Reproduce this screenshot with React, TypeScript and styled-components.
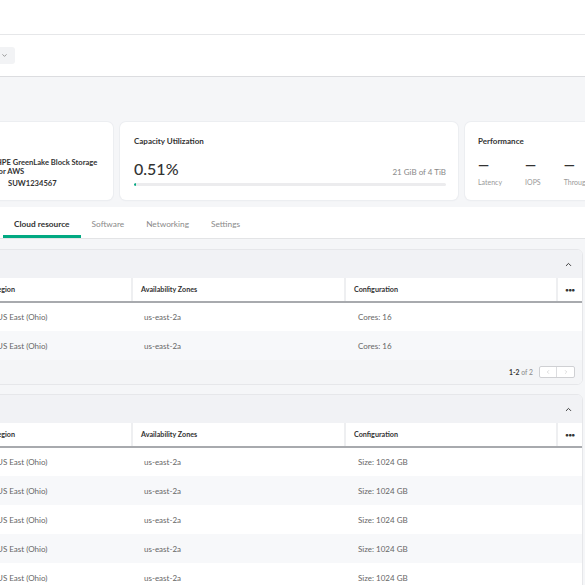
import styled, { createGlobalStyle } from "styled-components";
import { ChevronDown, ChevronUp, ChevronLeft, ChevronRight } from "lucide-react";

interface Row {
  region: string;
  zone: string;
  config: string;
}

const computeRows: Row[] = [
  { region: "US East (Ohio)", zone: "us-east-2a", config: "Cores: 16" },
  { region: "US East (Ohio)", zone: "us-east-2a", config: "Cores: 16" },
];

const volumeRows: Row[] = Array.from({ length: 6 }, () => ({
  region: "US East (Ohio)",
  zone: "us-east-2a",
  config: "Size: 1024 GB",
}));

const GlobalStyle = createGlobalStyle`
  html, body {
    margin: 0;
    padding: 0;
    background: #ffffff;
    overflow: hidden;
  }
  body {
    width: 585px;
    height: 585px;
    font-family: Lato, "Noto Sans", sans-serif;
    color: #333;
  }
  * { box-sizing: border-box; }
`;

export default function App() {
  const used = 0.51;

  const ResourceTable = ({ rows }: { rows: Row[] }) => (
    <Table>
      <colgroup>
        <col style={{ width: 147 }} />
        <col style={{ width: 213 }} />
        <col style={{ width: 212 }} />
        <col />
      </colgroup>
      <thead>
        <tr>
          <Th>Region</Th>
          <Th>Availability Zones</Th>
          <Th>Configuration</Th>
          <Th $center>
            <Dots>•••</Dots>
          </Th>
        </tr>
      </thead>
      <tbody>
        {rows.map((row, index) => (
          <Tr key={index} $striped={index % 2 === 1}>
            <Td>{row.region}</Td>
            <Td>{row.zone}</Td>
            <Td $pad={13}>{row.config}</Td>
            <Td />
          </Tr>
        ))}
      </tbody>
    </Table>
  );

  return (
    <>
      <GlobalStyle />
      <Page>
        <Header />
        <Toolbar>
          <SelectButton>
            <ChevronDown size={7} strokeWidth={2.5} />
          </SelectButton>
        </Toolbar>

        <Section>
          <CardRow>
            <Card>
              <ProductBlock>
                <ProductName>HPE GreenLake Block Storage</ProductName>
                <ProductName>for AWS</ProductName>
                <Serial>SUW1234567</Serial>
              </ProductBlock>
            </Card>

            <Card>
              <CardTitle>Capacity Utilization</CardTitle>
              <ValueRow>
                <BigValue>{used}%</BigValue>
                <Muted>21 GiB of 4 TiB</Muted>
              </ValueRow>
              <Bar>
                <BarFill style={{ width: `${used}%` }} />
              </Bar>
            </Card>

            <Card $inset={13}>
              <CardTitle>Performance</CardTitle>
              <Metrics>
                {["Latency", "IOPS", "Throughput"].map((label) => (
                  <Metric key={label}>
                    <Dash>—</Dash>
                    <MetricLabel>{label}</MetricLabel>
                  </Metric>
                ))}
              </Metrics>
            </Card>
          </CardRow>

          <TabBand>
            <Tab $active>Cloud resource</Tab>
            <Tab>Software</Tab>
            <Tab>Networking</Tab>
            <Tab>Settings</Tab>
          </TabBand>

          <Panel>
            <PanelHead>
              <ChevronUp size={9} strokeWidth={2.5} />
            </PanelHead>
            <ResourceTable rows={computeRows} />
            <PanelFoot>
              <PageInfo>
                <b>1-2</b> of 2
              </PageInfo>
              <Pager>
                <PagerButton>
                  <ChevronLeft size={6} strokeWidth={2} />
                </PagerButton>
                <PagerButton>
                  <ChevronRight size={6} strokeWidth={2} />
                </PagerButton>
              </Pager>
            </PanelFoot>
          </Panel>

          <Panel $gap={9}>
            <PanelHead>
              <ChevronUp size={9} strokeWidth={2.5} />
            </PanelHead>
            <ResourceTable rows={volumeRows} />
          </Panel>
        </Section>
      </Page>
    </>
  );
}

const Page = styled.div`
  width: 601px;
  margin-left: -16px;
`;

const Header = styled.header`
  height: 35px;
  border-bottom: 1px solid #e6e7e9;
`;

const Toolbar = styled.div`
  height: 42px;
  display: flex;
  align-items: center;
  border-bottom: 1px solid #dcdde0;
  box-shadow: 0 1px 0 #eceef0;
`;

const SelectButton = styled.div`
  width: 31px;
  height: 17px;
  display: flex;
  align-items: center;
  justify-content: flex-end;
  padding-right: 7px;
  background: #f2f3f5;
  border-radius: 3px;
  color: #777;
`;

const Section = styled.main`
  background: #f5f6f8;
  padding: 45px 2px 40px 0;
  min-height: 520px;
`;

const CardRow = styled.div`
  display: grid;
  grid-template-columns: 129px 338px 260px;
  column-gap: 7px;
  height: 78px;
`;

const Card = styled.div<{ $inset?: number }>`
  background: #ffffff;
  border-radius: 6px;
  box-shadow: 0 0 0 1px #eceef1, 0 1px 2px rgba(0, 0, 0, 0.04);
  padding: 14px 12px 12px ${(p) => p.$inset ?? 14}px;
  display: flex;
  flex-direction: column;
`;

const ProductBlock = styled.div`
  margin: auto 0 0 -2px;
  display: flex;
  flex-direction: column;
`;

const ProductName = styled.span`
  font-size: 7.6px;
  line-height: 9px;
  font-weight: 700;
  color: #333;
  white-space: nowrap;
`;

const Serial = styled.span`
  font-size: 7.6px;
  line-height: 10px;
  font-weight: 700;
  color: #333;
  margin: 2px 0 0 12px;
`;

const CardTitle = styled.div`
  font-size: 8px;
  line-height: 10px;
  font-weight: 700;
  color: #333;
`;

const ValueRow = styled.div`
  margin-top: 13px;
  height: 20px;
  display: flex;
  justify-content: space-between;
  align-items: baseline;
`;

const BigValue = styled.span`
  font-size: 16px;
  line-height: 20px;
  font-weight: 500;
  color: #333;
`;

const Muted = styled.span`
  font-size: 8px;
  color: #888;
`;

const Bar = styled.div`
  margin-top: 4px;
  height: 3px;
  background: #ececee;
  border-radius: 2px;
  overflow: hidden;
`;

const BarFill = styled.div`
  height: 100%;
  min-width: 2px;
  background: #01a982;
  border-radius: 2px;
`;

const Metrics = styled.div`
  margin-top: 13px;
  display: flex;
  gap: 23px;
`;

const Metric = styled.div`
  display: flex;
  flex-direction: column;
`;

const Dash = styled.span`
  font-size: 14px;
  line-height: 12px;
  font-weight: 700;
  color: #333;
`;

const MetricLabel = styled.span`
  margin-top: 6px;
  font-size: 7px;
  line-height: 10px;
  color: #999;
  white-space: nowrap;
`;

const TabBand = styled.nav`
  margin: 7px -2px 0 0;
  background: #ffffff;
  border-bottom: 1px solid #e3e4e6;
  padding-left: 19px;
  display: flex;
`;

const Tab = styled.div<{ $active?: boolean }>`
  padding: 12px 11px 6px;
  font-size: 8.3px;
  line-height: 10px;
  font-weight: ${(p) => (p.$active ? 700 : 400)};
  color: ${(p) => (p.$active ? "#333" : "#8a8a8a")};
  border-bottom: 3px solid ${(p) => (p.$active ? "#01a982" : "transparent")};
  white-space: nowrap;
`;

const Panel = styled.section<{ $gap?: number }>`
  margin-top: ${(p) => p.$gap ?? 10}px;
  background: #ffffff;
  border: 1px solid #e6e7ea;
  border-radius: 6px;
  overflow: hidden;
`;

const PanelHead = styled.div`
  height: 28px;
  background: #f1f2f5;
  display: flex;
  align-items: center;
  justify-content: flex-end;
  padding-right: 9px;
  color: #333;
`;

const Table = styled.table`
  width: 100%;
  table-layout: fixed;
  border-collapse: collapse;
`;

const Th = styled.th<{ $center?: boolean }>`
  height: 24px;
  padding: 0 ${(p) => (p.$center ? 0 : 8)}px;
  text-align: ${(p) => (p.$center ? "center" : "left")};
  font-size: 7.2px;
  font-weight: 700;
  color: #333;
  border-bottom: 2px solid #a8aaae;
  white-space: nowrap;

  &:not(:last-child) {
    border-right: 2px solid #eeeff1;
  }
`;

const Dots = styled.span`
  font-size: 6px;
  letter-spacing: -0.3px;
  color: #333;
`;

const Tr = styled.tr<{ $striped: boolean }>`
  background: ${(p) => (p.$striped ? "#f7f8fa" : "#ffffff")};
`;

const Td = styled.td<{ $pad?: number }>`
  height: 29px;
  padding: 0 ${(p) => p.$pad ?? 12}px;
  font-size: 8px;
  color: #666;
  white-space: nowrap;
`;

const PanelFoot = styled.div`
  height: 24px;
  background: #f4f5f7;
  display: flex;
  align-items: center;
  justify-content: flex-end;
  gap: 6px;
  padding-right: 7px;
`;

const PageInfo = styled.span`
  font-size: 6.8px;
  color: #888;

  b {
    color: #333;
  }
`;

const Pager = styled.div`
  display: flex;
  height: 12px;
  border: 1px solid #cfd0d3;
  border-radius: 2px;
  background: #ffffff;
`;

const PagerButton = styled.div`
  width: 17px;
  display: flex;
  align-items: center;
  justify-content: center;
  color: #bbb;

  &:first-child {
    border-right: 1px solid #dcdde0;
  }
`;
